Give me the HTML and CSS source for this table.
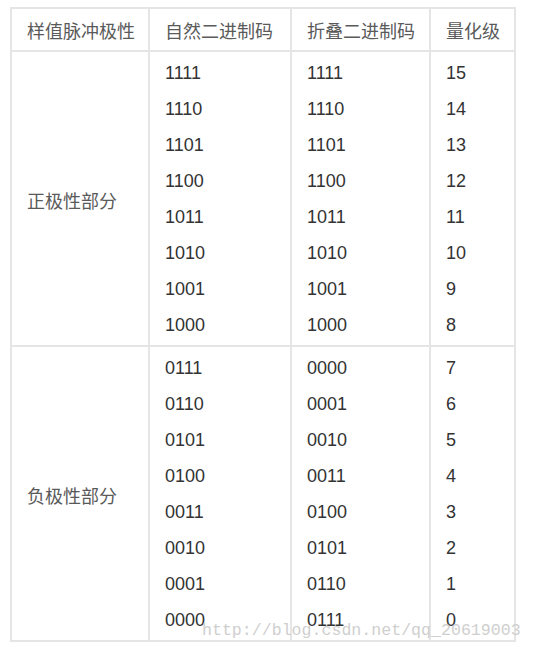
FILE: index.html
```html
<!DOCTYPE html>
<html lang="zh">
<head>
<meta charset="utf-8">
<link rel="stylesheet" href="styles.css">
</head>
<body>
<div class="wrap">
<table class="pcm">
  <colgroup>
    <col class="c1"><col class="c2"><col class="c3"><col class="c4">
  </colgroup>
  <thead>
    <tr><th>样值脉冲极性</th><th>自然二进制码</th><th>折叠二进制码</th><th>量化级</th></tr>
  </thead>
  <tbody class="grp">
    <tr class="first"><td class="pol" rowspan="8">正极性部分</td><td>1111</td><td>1111</td><td>15</td></tr>
    <tr><td>1110</td><td>1110</td><td>14</td></tr>
    <tr><td>1101</td><td>1101</td><td>13</td></tr>
    <tr><td>1100</td><td>1100</td><td>12</td></tr>
    <tr><td>1011</td><td>1011</td><td>11</td></tr>
    <tr><td>1010</td><td>1010</td><td>10</td></tr>
    <tr><td>1001</td><td>1001</td><td>9</td></tr>
    <tr class="last"><td>1000</td><td>1000</td><td>8</td></tr>
  </tbody>
  <tbody class="grp">
    <tr class="first"><td class="pol" rowspan="8">负极性部分</td><td>0111</td><td>0000</td><td>7</td></tr>
    <tr><td>0110</td><td>0001</td><td>6</td></tr>
    <tr><td>0101</td><td>0010</td><td>5</td></tr>
    <tr><td>0100</td><td>0011</td><td>4</td></tr>
    <tr><td>0011</td><td>0100</td><td>3</td></tr>
    <tr><td>0010</td><td>0101</td><td>2</td></tr>
    <tr><td>0001</td><td>0110</td><td>1</td></tr>
    <tr class="last"><td>0000</td><td>0111</td><td>0</td></tr>
  </tbody>
</table>
<div class="watermark">http://blog.csdn.net/qq_20619003</div>
</div>
</body>
</html>
```
FILE: styles.css
```css
html, body {
  margin: 0;
  padding: 0;
  background: #ffffff;
}
.wrap {
  position: relative;
  padding: 7px 0 0 10px;
}
.pcm {
  border-collapse: collapse;
  table-layout: fixed;
  width: 506px;
  border: 2px solid #e5e5e5;
  font-family: "Liberation Sans", Arial, "Noto Sans CJK SC", sans-serif;
  font-size: 18px;
  color: #333333;
}
.c1 { width: 138px; }
.c2 { width: 142px; }
.c3 { width: 139px; }
.c4 { width: 85px; }
.pcm th {
  height: 41px;
  padding: 0 0 0 15px;
  text-align: left;
  font-weight: normal;
  color: #5a5a5a;
  font-family: "Noto Sans CJK SC", sans-serif;
  font-size: 18px;
  line-height: 24px;
  border: 2px solid #e5e5e5;
  vertical-align: middle;
}
.pcm td {
  padding: 0 0 0 15px;
  line-height: 36px;
  border-left: 2px solid #e5e5e5;
  border-right: 2px solid #e5e5e5;
  vertical-align: middle;
}
.pcm tr.first td {
  padding-top: 3px;
}
.pcm tr.last td {
  padding-bottom: 2px;
}
.pcm td.pol {
  padding-top: 0;
  padding-bottom: 0;
  color: #5a5a5a;
  font-family: "Noto Sans CJK SC", sans-serif;
  font-size: 18px;
  line-height: 24px;
}
.grp {
  border-top: 2px solid #e5e5e5;
}
.watermark {
  position: absolute;
  left: 202px;
  top: 621px;
  font-family: "Liberation Mono", monospace;
  font-size: 16.6px;
  line-height: 20px;
  color: #cfcfcf;
  white-space: nowrap;
  pointer-events: none;
}
```
